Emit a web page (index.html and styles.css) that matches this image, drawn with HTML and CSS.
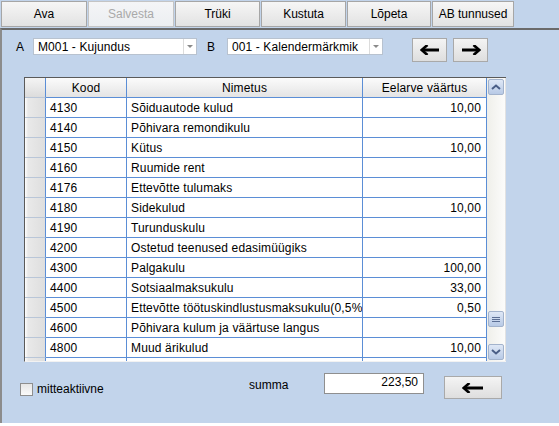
FILE: index.html
```html
<!DOCTYPE html>
<html>
<head>
<meta charset="utf-8">
<link rel="stylesheet" href="styles.css">
</head>
<body>
<div class="toolbar">
  <button class="tb w86">Ava</button>
  <button class="tb w86 disabled">Salvesta</button>
  <button class="tb w85">Trüki</button>
  <button class="tb w85">Kustuta</button>
  <button class="tb w84">Lõpeta</button>
  <button class="tb w82">AB tunnused</button>
</div>
<div class="panel">
  <div class="filters">
    <span class="lbl lbl-a">A</span>
    <div class="combo combo-a"><span class="combo-text">M001 - Kujundus</span><span class="combo-btn"><i class="tri"></i></span></div>
    <span class="lbl lbl-b">B</span>
    <div class="combo combo-b"><span class="combo-text">001 - Kalendermärkmik</span><span class="combo-btn"><i class="tri"></i></span></div>
    <button class="nav nav-prev"><svg width="20" height="10" viewBox="0 0 20 10"><path d="M2.5 5H19" stroke="#000" stroke-width="3" fill="none"/><path d="M6.5 0.8L1.8 5L6.5 9.2" stroke="#000" stroke-width="2.6" fill="none" stroke-linecap="square"/></svg></button>
    <button class="nav nav-next"><svg width="20" height="10" viewBox="0 0 20 10"><path d="M1 5H17.5" stroke="#000" stroke-width="3" fill="none"/><path d="M13.5 0.8L18.2 5L13.5 9.2" stroke="#000" stroke-width="2.6" fill="none" stroke-linecap="square"/></svg></button>
  </div>
  <div class="tableframe">
    <div class="grid">
      <div class="row head">
        <div class="c rh"></div><div class="c kood center">Kood</div><div class="c nim center">Nimetus</div><div class="c val center">Eelarve väärtus</div>
      </div>
      <div class="row"><div class="c rh"></div><div class="c kood">4130</div><div class="c nim">Sõiduautode kulud</div><div class="c val num">10,00</div></div>
      <div class="row"><div class="c rh"></div><div class="c kood">4140</div><div class="c nim">Põhivara remondikulu</div><div class="c val num"></div></div>
      <div class="row"><div class="c rh"></div><div class="c kood">4150</div><div class="c nim">Kütus</div><div class="c val num">10,00</div></div>
      <div class="row"><div class="c rh"></div><div class="c kood">4160</div><div class="c nim">Ruumide rent</div><div class="c val num"></div></div>
      <div class="row"><div class="c rh"></div><div class="c kood">4176</div><div class="c nim">Ettevõtte tulumaks</div><div class="c val num"></div></div>
      <div class="row"><div class="c rh"></div><div class="c kood">4180</div><div class="c nim">Sidekulud</div><div class="c val num">10,00</div></div>
      <div class="row"><div class="c rh"></div><div class="c kood">4190</div><div class="c nim">Turunduskulu</div><div class="c val num"></div></div>
      <div class="row"><div class="c rh"></div><div class="c kood">4200</div><div class="c nim">Ostetud teenused edasimüügiks</div><div class="c val num"></div></div>
      <div class="row"><div class="c rh"></div><div class="c kood">4300</div><div class="c nim">Palgakulu</div><div class="c val num">100,00</div></div>
      <div class="row"><div class="c rh"></div><div class="c kood">4400</div><div class="c nim">Sotsiaalmaksukulu</div><div class="c val num">33,00</div></div>
      <div class="row"><div class="c rh"></div><div class="c kood">4500</div><div class="c nim">Ettevõtte töötuskindlustusmaksukulu(0,5%)</div><div class="c val num">0,50</div></div>
      <div class="row"><div class="c rh"></div><div class="c kood">4600</div><div class="c nim">Põhivara kulum ja väärtuse langus</div><div class="c val num"></div></div>
      <div class="row"><div class="c rh"></div><div class="c kood">4800</div><div class="c nim">Muud ärikulud</div><div class="c val num">10,00</div></div>
      <div class="row"><div class="c rh"></div><div class="c kood"></div><div class="c nim"></div><div class="c val num"></div></div>
    </div>
    <div class="vscroll">
      <div class="sbtn"><svg width="10" height="6" viewBox="0 0 10 6"><path d="M1 5L5 1.5L9 5" stroke="#4a5e86" stroke-width="2" fill="none"/></svg></div>
      <div class="thumb"><i></i><i></i><i></i></div>
      <div class="sbtn down"><svg width="10" height="6" viewBox="0 0 10 6"><path d="M1 1L5 4.5L9 1" stroke="#4a5e86" stroke-width="2" fill="none"/></svg></div>
    </div>
  </div>
  <div class="bottom">
    <label class="chk"><span class="box"></span><span>mitteaktiivne</span></label>
    <span class="sumlbl">summa</span>
    <div class="sumfield">223,50</div>
    <button class="nav back"><svg width="22" height="10" viewBox="0 0 22 10"><path d="M2.5 5H21" stroke="#000" stroke-width="3" fill="none"/><path d="M6.5 0.8L1.8 5L6.5 9.2" stroke="#000" stroke-width="2.6" fill="none" stroke-linecap="square"/></svg></button>
  </div>
</div>
</body>
</html>
```
FILE: styles.css
```css
* { box-sizing: border-box; }
html, body { margin: 0; padding: 0; }
body {
  width: 559px;
  height: 426px;
  background: #ffffff;
  font-family: "Liberation Sans", Arial, sans-serif;
  font-size: 12px;
  color: #000;
  overflow: hidden;
}
button { font-family: inherit; font-size: 12px; color: #000; padding: 0; cursor: default; }

.toolbar {
  height: 28px;
  background: #c2d4eb;
  display: flex;
  gap: 1px;
  padding: 1px 0 0 1px;
}
.tb {
  height: 26px;
  border: 1px solid #a6a6a6;
  background: linear-gradient(#f6f6f6, #e2e2e2);
}
.tb.disabled { color: #a9a9a9; background: linear-gradient(#f4f5f7, #eceef1); border-color: #c4c4c4; }
.w86 { width: 86px; }
.w85 { width: 85px; }
.w84 { width: 84px; }
.w82 { width: 82px; }

.panel {
  height: 395px;
  background: #c2d4eb;
  border-top: 2px solid #6a6a6a;
  border-left: 2px solid #8c8c8c;
  display: flex;
  flex-direction: column;
}

.filters {
  display: flex;
  align-items: flex-start;
  margin-top: 8px;
  padding-left: 14px;
  height: 24px;
}
.lbl { line-height: 17px; padding-top: 1px; }
.lbl-a { width: 17px; }
.lbl-b { width: 20px; margin-left: 10px; }
.combo {
  height: 17px;
  background: #fff;
  border: 1px solid #b8c2cf;
  display: flex;
}
.combo-a { width: 164px; }
.combo-b { width: 156px; }
.combo-text {
  flex: 1;
  padding-left: 4px;
  padding-top: 1px;
  line-height: 14px;
  white-space: nowrap;
  overflow: hidden;
  letter-spacing: 0.1px;
}
.combo-btn {
  width: 13px;
  border-left: 1px solid #dcdcdc;
  display: flex;
  align-items: center;
  justify-content: center;
}
.tri {
  width: 0; height: 0;
  border-left: 3px solid transparent;
  border-right: 3px solid transparent;
  border-top: 3px solid #8a8a8a;
}
.nav {
  width: 35px;
  height: 24px;
  border: 1px solid #a9a9a9;
  background: linear-gradient(#f4f4f4, #dedede);
  display: flex;
  align-items: center;
  justify-content: center;
}
.nav-prev { margin-left: 29px; }
.nav-next { margin-left: 6px; }

.tableframe {
  margin-top: 15px;
  margin-left: 22px;
  width: 482px;
  height: 285px;
  display: flex;
  border-top: 1px solid #5a5a5a;
  border-left: 1px solid #5a5a5a;
  border-bottom: 1px solid #f2f2f2;
}
.grid {
  width: 462px;
  height: 283px;
  overflow: hidden;
  background: #fff;
}
.row { display: flex; height: 20px; }
.c {
  height: 20px;
  border-right: 1px solid #5b8ed6;
  border-bottom: 1px solid #5b8ed6;
  padding: 2px 4px 0;
  line-height: 17px;
  white-space: nowrap;
  overflow: hidden;
  letter-spacing: 0.15px;
}
.rh {
  width: 21px;
  background: linear-gradient(90deg, #ffffff 0, #e9e9e9 3px, #dedede 100%);
  border-bottom-color: #b9c6d8;
}
.kood { width: 81px; }
.nim { width: 236px; padding-left: 4px; }
.val { width: 124px; }
.num { text-align: right; padding-right: 5px; }
.center { text-align: center; }
.head .c {
  background: linear-gradient(#fbfbfb, #e4e4e4);
}
.head .rh { background: linear-gradient(#f4f4f4, #dcdcdc); }

.vscroll {
  width: 19px;
  height: 283px;
  background: linear-gradient(90deg, #efefea, #fcfcfb);
  border-right: 1px solid #e2e2e2;
  display: flex;
  flex-direction: column;
  align-items: center;
  padding-top: 1px;
}
.sbtn, .thumb {
  width: 16px;
  height: 16px;
  border: 1px solid #a3b3cc;
  border-radius: 2px;
  background: linear-gradient(#dfe8f6, #b8cae6);
  display: flex;
  align-items: center;
  justify-content: center;
}
.thumb {
  margin-top: auto;
  flex-direction: column;
  gap: 1px;
}
.thumb i { display: block; width: 8px; height: 1px; background: #5c6f94; }
.sbtn.down { margin-top: 17px; margin-bottom: 1px; }

.bottom {
  display: flex;
  align-items: flex-start;
  margin-top: 11px;
}
.chk {
  display: flex;
  align-items: center;
  gap: 4px;
  margin-left: 18px;
  margin-top: 9px;
  width: 229px;
}
.box {
  width: 13px;
  height: 13px;
  border: 1px solid #8e8e8e;
  background: linear-gradient(#e6e6e6, #fafafa);
}
.sumlbl { line-height: 14px; margin-top: 5px; width: 75px; }
.sumfield {
  width: 100px;
  height: 21px;
  background: #fff;
  border: 1px solid #8f8f8f;
  text-align: right;
  padding-right: 5px;
  line-height: 17px;
}
.nav.back {
  width: 58px;
  height: 23px;
  margin-left: 20px;
  margin-top: 3px;
}
```
